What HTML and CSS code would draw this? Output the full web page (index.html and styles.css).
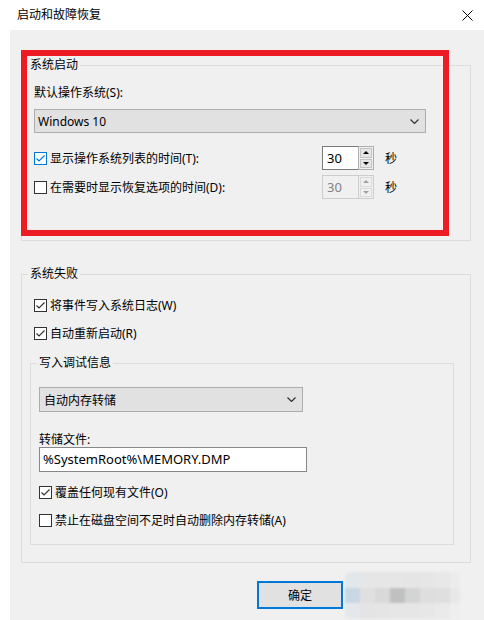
FILE: index.html
```html
<!DOCTYPE html>
<html lang="zh-CN">
<head>
  <meta charset="UTF-8">
  <title>启动和故障恢复</title>
  <link rel="stylesheet" href="styles.css">
</head>
<body>

<div class="window">
  <div class="titlebar">
    <span class="title">启动和故障恢复</span>
    <svg class="close" width="11" height="11" viewBox="0 0 11 11">
      <path d="M0.5 0.5 L10.5 10.5 M10.5 0.5 L0.5 10.5" stroke="#000" stroke-width="1" fill="none"/>
    </svg>
  </div>

  <div class="client">
    <!-- System startup -->
    <fieldset class="group">
      <legend>系统启动</legend>
      <div class="group-body startup">
        <div class="label first">默认操作系统(S):</div>
        <div class="select os-select">
          <span>Windows 10</span>
          <svg class="chevron" width="9" height="5" viewBox="0 0 9 5"><path d="M0.5 0.5 L4.5 4.5 L8.5 0.5" stroke="#333" stroke-width="1.2" fill="none"/></svg>
        </div>
        <div class="row timer-row first-timer">
          <div class="timer-label">
            <span class="box focus">
              <svg width="11" height="11" viewBox="0 0 11 11"><polyline points="1.5,5.5 4,8 9.5,2.5" stroke="#0078d7" stroke-width="1.2" fill="none"/></svg>
            </span>
            <span>显示操作系统列表的时间(T):</span>
          </div>
          <div class="spin">
            <div class="spin-value">30</div>
            <div class="spin-buttons">
              <div class="spin-btn"><span class="tri up"></span></div>
              <div class="spin-btn"><span class="tri down"></span></div>
            </div>
          </div>
          <span class="unit">秒</span>
        </div>
        <div class="row timer-row">
          <div class="timer-label">
            <span class="box"></span>
            <span>在需要时显示恢复选项的时间(D):</span>
          </div>
          <div class="spin disabled">
            <div class="spin-value">30</div>
            <div class="spin-buttons">
              <div class="spin-btn"><span class="tri up"></span></div>
              <div class="spin-btn"><span class="tri down"></span></div>
            </div>
          </div>
          <span class="unit">秒</span>
        </div>
      </div>
    </fieldset>

    <div class="highlight"></div>

    <!-- System failure -->
    <fieldset class="group failure">
      <legend>系统失败</legend>
      <div class="group-body failure-body">
        <div class="row check-row indent first-check">
          <span class="box">
            <svg width="11" height="11" viewBox="0 0 11 11"><polyline points="1.5,5.5 4,8 9.5,2.5" stroke="#333" stroke-width="1.2" fill="none"/></svg>
          </span>
          <span>将事件写入系统日志(W)</span>
        </div>
        <div class="row check-row indent">
          <span class="box">
            <svg width="11" height="11" viewBox="0 0 11 11"><polyline points="1.5,5.5 4,8 9.5,2.5" stroke="#333" stroke-width="1.2" fill="none"/></svg>
          </span>
          <span>自动重新启动(R)</span>
        </div>

        <fieldset class="group debug">
          <legend>写入调试信息</legend>
          <div class="group-body debug-body">
            <div class="select dump-select">
              <span>自动内存转储</span>
              <svg class="chevron" width="9" height="5" viewBox="0 0 9 5"><path d="M0.5 0.5 L4.5 4.5 L8.5 0.5" stroke="#333" stroke-width="1.2" fill="none"/></svg>
            </div>
            <div class="label dump-label">转储文件:</div>
            <div class="textbox">%SystemRoot%\MEMORY.DMP</div>
            <div class="row check-row overwrite">
              <span class="box">
                <svg width="11" height="11" viewBox="0 0 11 11"><polyline points="1.5,5.5 4,8 9.5,2.5" stroke="#333" stroke-width="1.2" fill="none"/></svg>
              </span>
              <span>覆盖任何现有文件(O)</span>
            </div>
            <div class="row check-row">
              <span class="box"></span>
              <span>禁止在磁盘空间不足时自动删除内存转储(A)</span>
            </div>
          </div>
        </fieldset>
      </div>
    </fieldset>

    <div class="buttons">
      <div class="btn default">确定</div>
      <div class="mosaic">
        <span style="background:#e2e7ec"></span><span style="background:#e6e6e6"></span><span style="background:#e6e6e6"></span><span style="background:#e6e6e6"></span><span style="background:#e5e5e5"></span><span style="background:#e6e6e6"></span><span style="background:#e8e8e8"></span><span style="background:#ececec"></span>
        <span style="background:#c8d7e4"></span><span style="background:#e0e0e0"></span><span style="background:#d9d9d9"></span><span style="background:#c0c0c0"></span><span style="background:#d3d5d4"></span><span style="background:#dedede"></span><span style="background:#dfdfdf"></span><span style="background:#e8e8e8"></span>
        <span style="background:#e4e8ec"></span><span style="background:#e4e4e4"></span><span style="background:#e5e5e5"></span><span style="background:#e6e6e6"></span><span style="background:#e6e6e6"></span><span style="background:#e7e7e7"></span><span style="background:#eaeaea"></span><span style="background:#eeeeee"></span>
      </div>
    </div>
  </div>
</div>

</body>
</html>
```

FILE: styles.css
```css
body {
  margin: 0;
  font-family: "Noto Sans", "Noto Sans CJK SC", sans-serif;
  font-size: 12px;
  color: #000;
  background-color: #fff;
}
.window {
  width: 484px;
  height: 620px;
  overflow: hidden;
}
.titlebar {
  height: 30px;
  display: flex;
  align-items: center;
  justify-content: space-between;
  padding: 0 11px 0 17px;
  background-color: #fff;
}
.title {
  line-height: 16px;
}
.client {
  position: relative;
  margin-left: 10px;
  height: 590px;
  padding: 27px 13px 0 11px;
  box-sizing: border-box;
  background-color: #f0f0f0;
}
.group {
  margin: 0;
  padding: 0;
  border: 1px solid #dcdcdc;
  min-width: 0;
}
.group legend {
  margin-left: 6px;
  padding: 0 2px;
  line-height: 16px;
}
.label {
  line-height: 16px;
}
.row {
  display: flex;
  align-items: center;
}

/* System startup */
.startup {
  padding: 12px 12px 41px;
}
.os-select {
  margin-top: 8px;
  width: 392px;
}
.timer-row {
  height: 24px;
  margin-top: 5px;
}
.first-timer {
  margin-top: 13px;
}
.timer-label {
  flex: 0 0 288px;
  display: flex;
  align-items: center;
}
.unit {
  margin-left: 11px;
}

/* checkbox */
.box {
  flex: none;
  width: 11px;
  height: 11px;
  border: 1px solid #333;
  background-color: #fff;
  margin-right: 3px;
  display: flex;
}
.box.focus {
  border-color: #0078d7;
}
.check-row {
  height: 16px;
  margin-top: 12px;
}
.indent {
  margin-left: 4px;
}

/* dropdown */
.select {
  height: 24px;
  box-sizing: border-box;
  border: 1px solid #adadad;
  background-color: #e1e1e1;
  display: flex;
  align-items: center;
  justify-content: space-between;
  padding: 0 6px 0 3px;
}
.chevron {
  display: block;
}

/* spinner */
.spin {
  display: flex;
  height: 24px;
}
.spin-value {
  width: 36px;
  box-sizing: border-box;
  border: 1px solid #7a7a7a;
  border-right: none;
  background-color: #fff;
  padding-left: 4px;
  font-size: 13px;
  line-height: 22px;
}
.spin-buttons {
  width: 16px;
  box-sizing: border-box;
  border: 1px solid #adadad;
  display: flex;
  flex-direction: column;
  gap: 1px;
  padding: 1px;
  background-color: #f0f0f0;
}
.spin-btn {
  flex: 1;
  background-color: #e5e5e5;
  border: 1px solid #c4c4c4;
  display: flex;
  align-items: center;
  justify-content: center;
}
.tri {
  width: 0;
  height: 0;
  border-left: 3px solid transparent;
  border-right: 3px solid transparent;
}
.tri.up {
  border-bottom: 3px solid #000;
}
.tri.down {
  border-top: 3px solid #000;
}
.spin.disabled .spin-value {
  border-color: #cccccc;
  background-color: #f0f0f0;
  color: #838383;
}
.spin.disabled .spin-buttons {
  border-color: #cccccc;
}
.spin.disabled .spin-btn {
  background-color: #f0f0f0;
  border-color: #dadada;
}
.spin.disabled .tri.up {
  border-bottom-color: #a0a0a0;
}
.spin.disabled .tri.down {
  border-top-color: #a0a0a0;
}

/* red annotation frame */
.highlight {
  position: absolute;
  left: 11px;
  top: 20px;
  width: 416px;
  height: 174px;
  border: 6px solid #ed1c24;
  pointer-events: none;
}

/* System failure */
.failure {
  margin-top: 25px;
}
.failure-body {
  padding: 0 16px 17px 8px;
}
.first-check {
  margin-top: 15px;
}
.debug {
  margin-top: 14px;
  width: 424px;
  box-sizing: border-box;
}
.debug-body {
  padding: 0 8px 16px;
}
.dump-select {
  margin-top: 16px;
  width: 264px;
  height: 25px;
  padding-left: 4px;
}
.dump-label {
  margin-top: 20px;
  line-height: 15px;
}
.textbox {
  width: 268px;
  height: 25px;
  box-sizing: border-box;
  border: 1px solid #888;
  background-color: #fff;
  padding-left: 3px;
  font-size: 13px;
  line-height: 23px;
}

/* bottom buttons */
.buttons {
  display: flex;
  justify-content: flex-end;
  align-items: center;
  gap: 2px;
  height: 50px;
  margin-top: 7px;
  margin-right: -13px;
  padding-right: 24px;
}
.btn {
  width: 86px;
  height: 28px;
  box-sizing: border-box;
  border: 1px solid #adadad;
  background-color: #e1e1e1;
  display: flex;
  align-items: center;
  justify-content: center;
}
.btn.default {
  border: 2px solid #0078d7;
}
.mosaic {
  display: grid;
  grid-template-columns: repeat(7, 15px) 10px;
  grid-template-rows: 16px 15px 16px;
  filter: blur(1px);
  border-radius: 6px;
  overflow: hidden;
}
```
